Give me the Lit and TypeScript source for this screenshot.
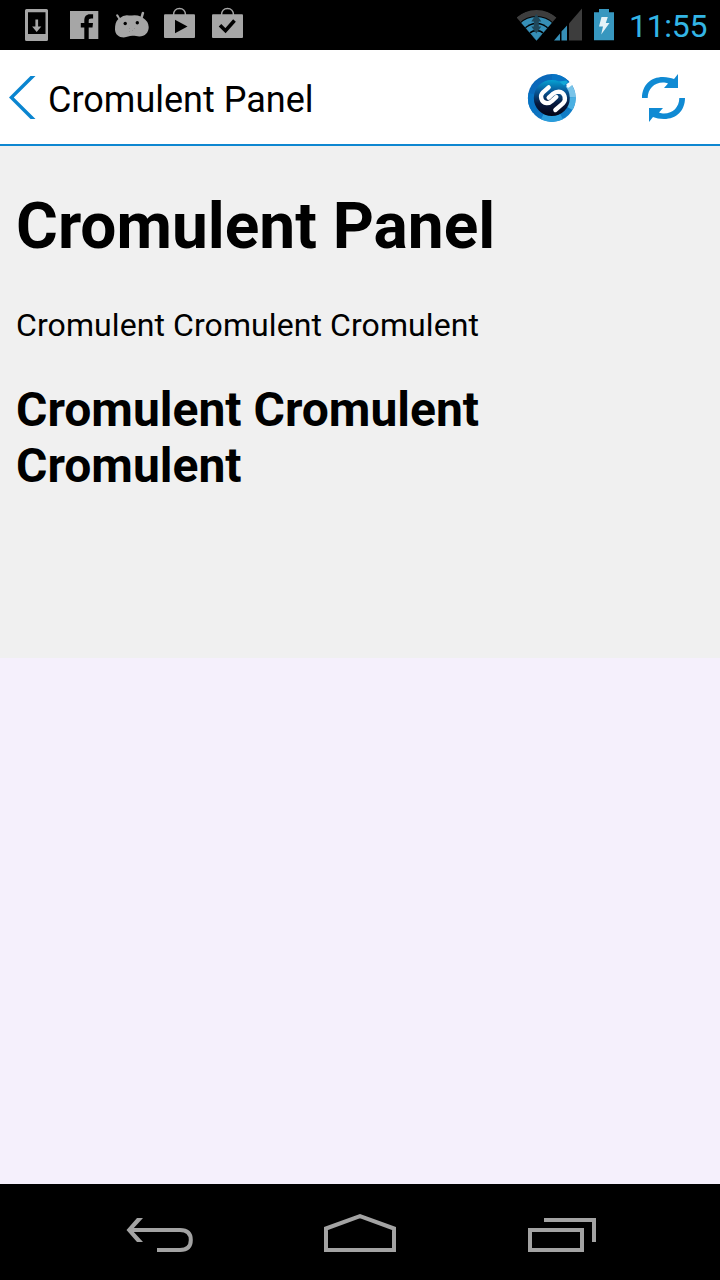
import { LitElement, html, css, svg } from "lit";
import { customElement } from "lit/decorators.js";

@customElement("status-bar")
class StatusBar extends LitElement {
  static styles = css`
    :host { display: flex; height: 50px; background: #000; box-sizing: border-box; padding: 0 12px; }
    svg { display: block; flex: none; }
    .right { margin-left: auto; display: flex; }
    .clock { font: 32px/52px Roboto, sans-serif; color: #33b5e5; width: 79px; margin-left: 13px; white-space: nowrap; letter-spacing: -0.3px; }
  `;
  icon(x: number, body: unknown) {
    return html`<svg width="48" height="50" viewBox="${x} 0 48 50" fill="#a6a6a6">${body}</svg>`;
  }
  render() {
    return html`
      ${this.icon(12, svg`<path fill-rule="evenodd" d="M26.500 9h20q1.500 0 1.500 1.500v29q0 1.500-1.500 1.500h-20q-1.500 0-1.500-1.500v-29q0-1.500 1.500-1.500zM28 12.300v21.700h17.500v-21.700z"/><path d="M35.400 19.500h2.700v7h3.200l-4.600 5.500-4.600-5.500h3.300z"/>`)}
      ${this.icon(60, svg`<path d="M70 11h28.300v28H70z"/><path fill="#000" d="M84.300 39V27.600h-3.500v-4.500h3.500v-2.500c0-4.300 2.200-6.400 5.500-6.400h3.300v4.300h-1.800c-1.900 0-2.600.7-2.600 2.400v2.200h4.300l-.5 4.500h-3.800V39z"/>`)}
      ${this.icon(108, svg`<path d="M116.600 14.400q1-.5 1.700.6l1.700 2.900q3-2.800 7-2.700 2.500.4 5 .3 5-.6 8.600 1.100l1-3.800q.7-1.400 2-.8 1 .6.500 1.600l-1.300 4.100q5.800 3.600 5.900 9.300c0 5.500-3.700 9.500-9.400 9.500-2.300 0-4-.7-7-.7-3.300 0-5 1.600-8.500 1.600-4.800 0-8.800-3-8.800-8.200 0-4.500.6-7.800 3.400-10.300l-2.200-3.200q-.4-.9.400-1.300z"/><circle cx="125.200" cy="23.500" r="1.700" fill="#000"/><circle cx="137.300" cy="22.700" r="1.700" fill="#000"/><path fill="#929292" d="M129 28h1v1h-1zM134 28h1v1h-1zM129 31h1v1h-1zM132 30h1v1h-1z"/>`)}
      ${this.icon(156, svg`<path d="M165 14.300h29q1 0 1 1V37q0 1-1 1h-29q-1 0-1-1V15.300q0-1 1-1z"/><path fill="none" stroke="#a6a6a6" stroke-width="1.500" d="M173.500 15c0-4 2.500-6.400 6-6.400s6 2.400 6 6.400"/><path fill="#000" d="M175 19.700l12.500 6.800-12.500 6.800z"/>`)}
      ${this.icon(204, svg`<path d="M213 14.300h29q1 0 1 1V37q0 1-1 1h-29q-1 0-1-1V15.300q0-1 1-1z"/><path fill="none" stroke="#a6a6a6" stroke-width="1.500" d="M221.500 15c0-4 2.500-6.400 6-6.400s6 2.400 6 6.400"/><path fill="none" stroke="#000" stroke-width="3.600" d="M220 25.300l5.500 5.400 9-10.200"/>`)}
      <div class="right">
        <svg width="99" height="50" viewBox="517 0 99 50">
          <clipPath id="fan"><path d="M536.500 40.500L516.500 17.500Q536.500 1 556.500 17.500z"/></clipPath>
          <g clip-path="url(#fan)">
            <circle cx="536.500" cy="40.500" r="30.500" fill="#3d3d3d"/>
            <circle cx="536.500" cy="40.500" r="24.500" fill="#000"/>
            <circle cx="536.500" cy="40.500" r="23.500" fill="#368fb7"/>
            <circle cx="536.500" cy="40.500" r="17.700" fill="#000"/>
            <circle cx="536.500" cy="40.500" r="16.300" fill="#368fb7"/>
            <circle cx="536.500" cy="40.500" r="10.700" fill="#000"/>
            <circle cx="536.500" cy="40.500" r="9.300" fill="#368fb7"/>
          </g>
          <path fill="#20485a" d="M536.300 14l5 7.500h-2.500v2.500h-5v-2.500h-2.500zM536.300 33.500l-5-7h2.500v-2.500h5v2.500h2.500z"/>
          <path fill="#3d3d3d" d="M569 23.500L582 8.500V40.500H569z"/>
          <path fill="#368fb7" d="M554 40.500l6-7v7zM561.500 31.500l1.200-1.400v10.400h-1.200zM562 31l5-5.500v15h-5z"/>
          <path fill="#3797bf" d="M599 9h10v3.300h5v28h-20v-28h5z"/>
          <path fill="#e4f2f7" d="M601.500 17h6.300l-2 6h3.700l-8.300 11.500 1.800-8h-4z"/>
        </svg>
        <div class="clock">11:55</div>
      </div>`;
  }
}

@customElement("action-bar")
class ActionBar extends LitElement {
  static styles = css`
    :host { display: flex; align-items: center; height: 96px; box-sizing: border-box; background: #fff; border-bottom: 2px solid #0e87d1; }
    svg { display: block; flex: none; }
    .title { font: 36px/42px Roboto, sans-serif; color: #000; margin-left: 8px; padding-top: 6px; flex: 1; white-space: nowrap; }
  `;
  render() {
    return html`
      <svg width="40" height="94" viewBox="0 50 40 94"><path fill="#0a85d0" d="M30.500 76H35.500L13.800 97.500 35.500 119H30.500L9 97.500z"/></svg>
      <div class="title">Cromulent Panel</div>
      <svg width="112" height="94" viewBox="496 50 112 94">
        <defs>
          <linearGradient id="ring" x1="0" y1="0" x2="1" y2="1"><stop offset="0" stop-color="#0761b5"/><stop offset="1" stop-color="#1384cb"/></linearGradient>
          <linearGradient id="disc" x1="0" y1="0" x2="0" y2="1"><stop offset="0" stop-color="#07a2d2"/><stop offset=".3" stop-color="#075b9d"/><stop offset=".65" stop-color="#071a3f"/><stop offset="1" stop-color="#030313"/></linearGradient>
        </defs>
        <circle cx="551.800" cy="98" r="23.900" fill="url(#ring)"/>
        <path fill="#0874c4" d="M551.800 98L528.500 93A24 24 0 0 0 533 113zM551.800 98L552 74.100A24 24 0 0 1 568.700 81.100z"/>
        <path fill="#2a9ddc" d="M551.800 98L541 119.300A24 24 0 0 0 563 119.200z"/>
        <path fill="#79c4e9" d="M551.800 98L570.500 83A24 24 0 0 1 575.700 97z"/>
        <path fill="#4bb0e2" d="M551.800 98L575.700 97A24 24 0 0 1 572.500 110z"/>
        <circle cx="551.800" cy="98" r="18" fill="url(#disc)"/>
        <path fill="#12a8d7" d="M559 81.500l7.500-1 1.500 2-4 3z"/>
        <path fill="#f8fdff" d="M567 87.200l-.7-3 3.700-2.400 2.500 3-4 3z"/>
        <g transform="translate(515 60) scale(.3333)" fill="none" stroke="#fff" stroke-width="13" stroke-linecap="round" stroke-linejoin="round"><path d="M101 82L84 97C73 108 79 128 94 129C102 130 107 127 112 122L124 111"/><path d="M121 150L143 131C156 118 149 96 131 95C123 95 118 98 113 102L101 113"/></g>
      </svg>
      <svg width="112" height="94" viewBox="608 50 112 94" fill="#108ad3">
        <path d="M642 98C642 85.500 650.500 77 663 77c4.500 0 8 1 11 2l4-5v14h-14l4-4.500c-1.500-.9-3.500-1-5-1C654 82.500 647.700 89 647.700 98z"/>
        <path d="M685 98C685 110.500 676.500 119 664 119c-4.500 0-8-1-11-2l-4 5v-14h14l-4 4.500c1.500.9 3.500 1 5 1C673 113.500 679.300 107 679.300 98z"/>
      </svg>`;
  }
}

@customElement("nav-bar")
class NavBar extends LitElement {
  static styles = css`
    :host { display: flex; gap: 100px; height: 96px; background: #000; padding-left: 110px; }
    svg { display: block; flex: none; }
  `;
  render() {
    return html`
      <svg width="100" height="96" viewBox="110 1184 100 96" fill="none" stroke="#a3a3a3" stroke-width="4"><path d="M131 1230h49c7.500 0 10.800 4 10.800 10s-3.300 10-10.800 10h-23"/><path fill="#a3a3a3" stroke="none" d="M137 1218h6l-11 12 11 12h-6l-10.500-12z"/></svg>
      <svg width="100" height="96" viewBox="310 1184 100 96" fill="none" stroke="#a3a3a3" stroke-width="4"><path d="M326 1250v-21.500l34-12.300 34 12.300V1250z"/></svg>
      <svg width="100" height="96" viewBox="510 1184 100 96" fill="none" stroke="#a3a3a3" stroke-width="4"><path d="M530 1230h52v20h-52zM544 1220h50v22"/></svg>`;
  }
}

@customElement("app-root")
class AppRoot extends LitElement {
  static styles = css`
    :host { display: flex; flex-direction: column; height: 1280px; background: #f5f0fc; font-family: Roboto, sans-serif; color: #000; }
    main { height: 512px; box-sizing: border-box; padding: 43px 16px 0; background: #f0f0f0; }
    h1 { font-size: 64px; line-height: 76px; margin: 0; white-space: nowrap; }
    p { font-size: 32px; line-height: 38px; margin: 41px 0 0; letter-spacing: 0.09px; white-space: nowrap; }
    h2 { font-size: 48px; line-height: 56px; margin: 38px 0 0; }
    nav-bar { margin-top: auto; }
  `;
  render() {
    return html`
      <status-bar></status-bar>
      <action-bar></action-bar>
      <main>
        <h1>Cromulent Panel</h1>
        <p>Cromulent Cromulent Cromulent</p>
        <h2>Cromulent Cromulent<br />Cromulent</h2>
      </main>
      <nav-bar></nav-bar>`;
  }
}
